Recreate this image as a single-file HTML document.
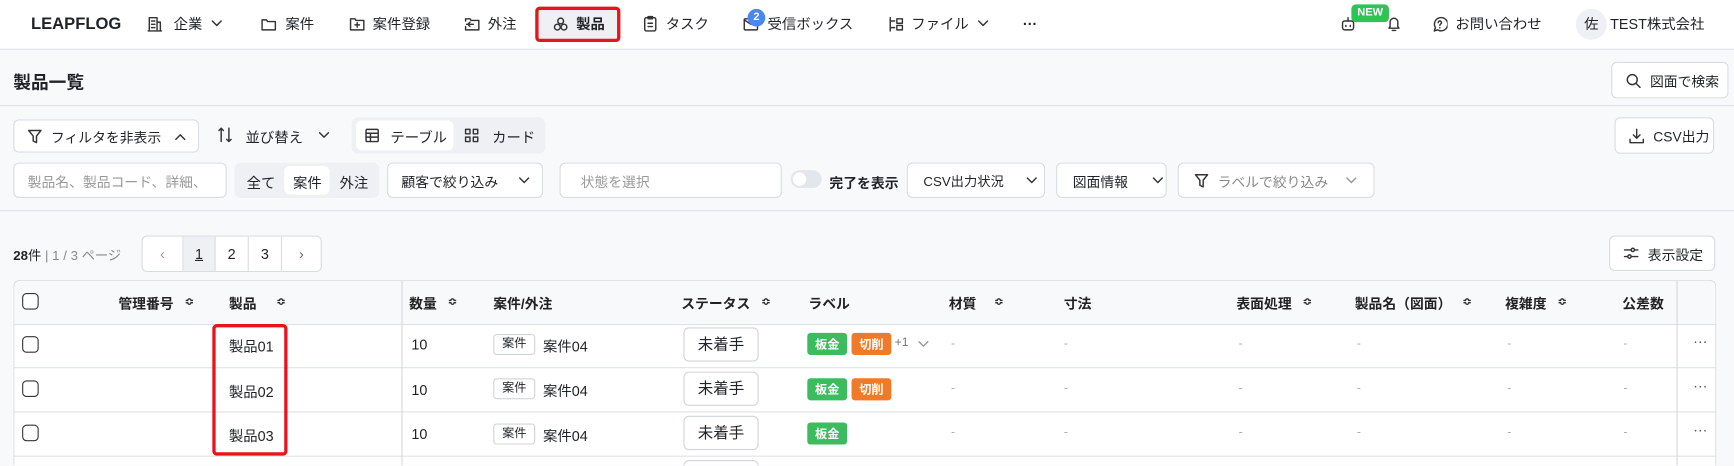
<!DOCTYPE html>
<html><head><meta charset="utf-8">
<style>
*{box-sizing:border-box;margin:0;padding:0}
html,body{width:1734px;height:466px;overflow:hidden;background:#f8f9fb}
body{font-family:"Liberation Sans","Noto Sans CJK JP",sans-serif;color:#1f2328;font-size:13px}
#w{position:absolute;left:0;top:0;width:1568px;height:421px;transform:scale(1.10587);transform-origin:0 0;background:#f8f9fb;overflow:hidden}
.a{position:absolute;white-space:nowrap}
.nav{position:absolute;left:0;top:0;width:1568px;height:45px;background:#fff;border-bottom:1px solid #dde1e7}
.nav .a{line-height:16px}
.btn{position:absolute;background:#fff;border:1px solid #d9dde3;border-radius:5px;display:flex;align-items:center;padding-left:12px;gap:8px;font-size:12.5px;white-space:nowrap}
svg{display:block}
.ic{stroke:#333;fill:none;stroke-width:1.3;stroke-linecap:round;stroke-linejoin:round}
.hl{position:absolute;left:0;width:1568px;height:1px;background:#dde1e7}
.th{position:absolute;top:253px;height:40px;display:flex;align-items:center;font-size:12.5px;font-weight:bold;color:#222;white-space:nowrap}
.cell{position:absolute;font-size:13px;white-space:nowrap}
.chk{position:absolute;left:20px;width:15px;height:15px;border:1.5px solid #333;border-radius:4px;background:#fff}
.tag{position:absolute;height:20px;border-radius:3px;color:#fff;font-size:11px;font-weight:bold;display:flex;align-items:center;justify-content:center}
.dash{position:absolute;color:#aaa;font-size:11px}
.srt{font-size:10px;color:#333;margin-left:10px}
</style></head><body><div id="w">
<div class="nav">
 <div class="a" style="left:28px;top:14px;font-weight:bold;font-size:15px">LEAPFLOG</div>
 <svg class="a ic" style="left:133px;top:15px" width="14" height="14" viewBox="0 0 14 14"><path d="M2 13V1h7v12M9 5h3v8M1 13h12M4 4h1M6 4h1M4 7h1M6 7h1M4 10h1M6 10h1"/></svg>
 <div class="a" style="left:157px;top:14px">企業</div>
 <svg class="a ic" style="left:191px;top:18px" width="10" height="7" viewBox="0 0 10 7"><path d="M1 1l4 4 4-4"/></svg>
 <svg class="a ic" style="left:236px;top:16px" width="14" height="12" viewBox="0 0 14 12"><path d="M1 2h4l1 1.5h7V11H1z"/></svg>
 <div class="a" style="left:258px;top:14px">案件</div>
 <svg class="a ic" style="left:316px;top:15px" width="14" height="13" viewBox="0 0 14 13"><path d="M1 2h4l1 1.5h7V12H1zM7 5.5v4M5 7.5h4"/></svg>
 <div class="a" style="left:337px;top:14px">案件登録</div>
 <svg class="a ic" style="left:420px;top:15px" width="14" height="13" viewBox="0 0 14 13"><path d="M1 4V2h4l1 1.5h7V12H1V9M2 7h6M5 5l-2 2 2 2"/></svg>
 <div class="a" style="left:441px;top:14px">外注</div>
 <div class="a" style="left:484px;top:6px;width:77px;height:32px;border:3px solid #e8141b;border-radius:4px;background:#eef0f4"></div>
 <svg class="a ic" style="left:500px;top:15px" width="14" height="14" viewBox="0 0 14 14"><circle cx="7" cy="4" r="2.6"/><circle cx="4" cy="9.5" r="2.6"/><circle cx="10" cy="9.5" r="2.6"/></svg>
 <div class="a" style="left:521px;top:14px;font-weight:bold">製品</div>
 <svg class="a ic" style="left:582px;top:14px" width="12" height="15" viewBox="0 0 12 15"><rect x="1" y="2" width="10" height="12" rx="1.5"/><path d="M4 1h4v2H4zM4 7h4M4 10h4"/></svg>
 <div class="a" style="left:602px;top:14px">タスク</div>
 <svg class="a ic" style="left:672px;top:16px" width="14" height="12" viewBox="0 0 14 12"><rect x="1" y="1" width="12" height="10" rx="1"/><path d="M1 2l6 4 6-4"/></svg>
 <div class="a" style="left:676px;top:8px;width:16px;height:16px;border-radius:50%;background:#4c86f0;color:#fff;font-size:10px;font-weight:bold;text-align:center;line-height:16px">2</div>
 <div class="a" style="left:694px;top:14px">受信ボックス</div>
 <svg class="a ic" style="left:803px;top:15px" width="14" height="14" viewBox="0 0 14 14"><path d="M2 1v12M2 4h4M2 10h4M8 2h5v4H8zM8 8h5v4H8z"/></svg>
 <div class="a" style="left:824px;top:14px">ファイル</div>
 <svg class="a ic" style="left:884px;top:18px" width="10" height="7" viewBox="0 0 10 7"><path d="M1 1l4 4 4-4"/></svg>
 <div class="a" style="left:925px;top:14px;font-weight:bold">···</div>
 <svg class="a ic" style="left:1213px;top:15px" width="12" height="14" viewBox="0 0 12 14"><rect x="1" y="4" width="10" height="8" rx="2"/><path d="M6 1v3M4 8v1M8 8v1"/></svg>
 <div class="a" style="left:1222px;top:4px;width:34px;height:16px;border-radius:4px;background:#2fc256;color:#fff;font-size:10px;font-weight:bold;text-align:center;line-height:16px">NEW</div>
 <svg class="a ic" style="left:1254px;top:14px" width="13" height="15" viewBox="0 0 13 15"><path d="M3 10V6a3.5 3.5 0 017 0v4l1 1.5H2zM5 13.5h3"/></svg>
 <svg class="a ic" style="left:1295px;top:15px" width="14" height="14" viewBox="0 0 14 14"><path d="M2 13l1-3a6 6 0 112 2z"/><path d="M5.5 5.5a1.5 1.5 0 113 0c0 1-1.5 1.3-1.5 2.5M7 10v.3"/></svg>
 <div class="a" style="left:1316px;top:14px">お問い合わせ</div>
 <div class="a" style="left:1425px;top:8px;width:28px;height:28px;border-radius:50%;background:#eef0f5;text-align:center;line-height:28px">佐</div>
 <div class="a" style="left:1456px;top:14px">TEST株式会社</div>
</div>
<div class="a" style="left:12px;top:61px;font-size:16px;font-weight:bold">製品一覧</div>
<div class="btn" style="left:1457px;top:56px;width:106px;height:33px"><svg class="ic" width="14" height="14" viewBox="0 0 14 14"><circle cx="6" cy="6" r="4.5"/><path d="M9.5 9.5L13 13"/></svg>図面で検索</div>
<div class="hl" style="top:95px"></div>
<div class="btn" style="left:12px;top:108px;width:168px;height:30px"><svg class="ic" width="13" height="13" viewBox="0 0 13 13"><path d="M1 1h11L8 6v6L5 10.5V6z"/></svg>フィルタを非表示<svg class="ic" style="margin-left:4px" width="10" height="7" viewBox="0 0 10 7"><path d="M1 6l4-4 4 4"/></svg></div>
<svg class="a ic" style="left:197px;top:115px" width="13" height="14" viewBox="0 0 13 14"><path d="M3 13V1M1 3l2-2 2 2M10 1v12M8 11l2 2 2-2"/></svg>
<div class="a" style="left:222px;top:114px">並び替え</div>
<svg class="a ic" style="left:288px;top:119px" width="10" height="7" viewBox="0 0 10 7"><path d="M1 1l4 4 4-4"/></svg>
<div class="a" style="left:318px;top:106px;width:175px;height:33px;background:#eef0f4;border-radius:6px"></div>
<div class="a" style="left:322px;top:109px;width:88px;height:27px;background:#fff;border-radius:5px"></div>
<svg class="a ic" style="left:330px;top:116px" width="13" height="13" viewBox="0 0 13 13"><rect x="1" y="1" width="11" height="11" rx="1"/><path d="M1 4.5h11M1 8h11M5 4.5V12"/></svg>
<div class="a" style="left:353px;top:114px">テーブル</div>
<svg class="a ic" style="left:420px;top:116px" width="13" height="13" viewBox="0 0 13 13"><rect x="1" y="1" width="4" height="4"/><rect x="8" y="1" width="4" height="4"/><rect x="1" y="8" width="4" height="4"/><rect x="8" y="8" width="4" height="4"/></svg>
<div class="a" style="left:445px;top:114px">カード</div>
<div class="btn" style="left:1460px;top:106px;width:90px;height:33px"><svg class="ic" width="14" height="14" viewBox="0 0 14 14"><path d="M7 1v8M4 6l3 3 3-3M1 10v3h12v-3"/></svg>CSV出力</div>
<div class="btn" style="left:12px;top:147px;width:193px;height:32px;color:#999">製品名、製品コード、詳細、</div>
<div class="a" style="left:212px;top:147px;width:131px;height:32px;background:#eef0f4;border-radius:6px"></div>
<div class="a" style="left:257px;top:150px;width:41px;height:26px;background:#fff;border-radius:5px"></div>
<div class="a" style="left:223px;top:155px">全て</div>
<div class="a" style="left:265px;top:155px">案件</div>
<div class="a" style="left:307px;top:155px">外注</div>
<div class="btn" style="left:350px;top:147px;width:141px;height:32px">顧客で絞り込み<svg class="ic" style="margin-left:10px" width="10" height="7" viewBox="0 0 10 7"><path d="M1 1l4 4 4-4"/></svg></div>
<div class="btn" style="left:506px;top:147px;width:201px;height:32px;color:#999;padding-left:18px">状態を選択</div>
<div class="a" style="left:715px;top:154px;width:28px;height:16px;border-radius:8px;background:#e3e6eb"><div style="position:absolute;left:2px;top:2px;width:12px;height:12px;border-radius:50%;background:#fff"></div></div>
<div class="a" style="left:750px;top:155px;font-weight:bold;font-size:12.5px">完了を表示</div>
<div class="btn" style="left:820px;top:147px;width:125px;height:32px;padding-left:14px;font-size:12px">CSV出力状況<svg class="ic" style="margin-left:12px" width="10" height="7" viewBox="0 0 10 7"><path d="M1 1l4 4 4-4"/></svg></div>
<div class="btn" style="left:955px;top:147px;width:100px;height:32px;padding-left:14px">図面情報<svg class="ic" style="margin-left:14px" width="10" height="7" viewBox="0 0 10 7"><path d="M1 1l4 4 4-4"/></svg></div>
<div class="btn" style="left:1065px;top:147px;width:178px;height:32px;color:#888;padding-left:14px"><svg class="ic" width="13" height="13" viewBox="0 0 13 13"><path d="M1 1h11L8 6v6L5 10.5V6z"/></svg>ラベルで絞り込み<svg class="ic" style="margin-left:8px;stroke:#999" width="10" height="7" viewBox="0 0 10 7"><path d="M1 1l4 4 4-4"/></svg></div>
<div class="hl" style="top:190px"></div>
<div class="a" style="left:12px;top:222px;font-size:12px"><b style="font-weight:bold">28</b>件 <span style="color:#888">| 1 / 3 ページ</span></div>
<div class="a" style="left:128px;top:213px;width:163px;height:33px;border:1px solid #d9dde3;border-radius:5px;background:#fff;display:flex;font-size:13px">
 <div style="width:37px;text-align:center;line-height:31px;color:#999;border-right:1px solid #d9dde3">‹</div>
 <div style="width:29px;text-align:center;line-height:31px;background:#eef0f4;border-right:1px solid #d9dde3;text-decoration:underline">1</div>
 <div style="width:30px;text-align:center;line-height:31px;border-right:1px solid #d9dde3">2</div>
 <div style="width:30px;text-align:center;line-height:31px;border-right:1px solid #d9dde3">3</div>
 <div style="width:35px;text-align:center;line-height:31px;color:#666">›</div>
</div>
<div class="btn" style="left:1455px;top:213px;width:96px;height:32px"><svg class="ic" width="14" height="14" viewBox="0 0 14 14"><path d="M1 4h6M10 4h3M1 10h3M7 10h6"/><circle cx="8.5" cy="4" r="1.5"/><circle cx="5.5" cy="10" r="1.5"/></svg>表示設定</div>
<div class="a" style="left:12px;top:253px;width:1540px;height:168px;background:#fff;border:1px solid #d9dde3;border-bottom:none;border-radius:6px 6px 0 0"></div>
<div class="a" style="left:13px;top:254px;width:1538px;height:39px;background:#f8f9fb;border-radius:6px 6px 0 0"></div>
<div class="a" style="left:12px;top:293px;width:1540px;height:1px;background:#dde1e7"></div>
<div class="a" style="left:12px;top:332px;width:1540px;height:1px;background:#dde1e7"></div>
<div class="a" style="left:12px;top:372px;width:1540px;height:1px;background:#dde1e7"></div>
<div class="a" style="left:12px;top:412px;width:1540px;height:1px;background:#dde1e7"></div>
<div class="a" style="left:363px;top:254px;width:1px;height:167px;background:#d4d8de"></div>
<div class="a" style="left:1516px;top:254px;width:1px;height:167px;background:#d4d8de"></div>
<div class="chk" style="top:265px"></div>
<div class="th" style="left:107px">管理番号<span class="srt">≎</span></div>
<div class="th" style="left:207px">製品<span class="srt" style="margin-left:18px">≎</span></div>
<div class="th" style="left:370px">数量<span class="srt">≎</span></div>
<div class="th" style="left:446px">案件/外注</div>
<div class="th" style="left:616px">ステータス<span class="srt">≎</span></div>
<div class="th" style="left:731px">ラベル</div>
<div class="th" style="left:858px">材質<span class="srt" style="margin-left:16px">≎</span></div>
<div class="th" style="left:962px">寸法</div>
<div class="th" style="left:1118px">表面処理<span class="srt">≎</span></div>
<div class="th" style="left:1225px">製品名（図面）<span class="srt">≎</span></div>
<div class="th" style="left:1361px">複雑度<span class="srt">≎</span></div>
<div class="th" style="left:1467px">公差数</div>

<div class="chk" style="top:304px"></div><div class="chk" style="top:344px"></div><div class="chk" style="top:384px"></div>
<div class="cell" style="left:207px;top:303px">製品01</div>
<div class="cell" style="left:207px;top:344px">製品02</div>
<div class="cell" style="left:207px;top:384px">製品03</div>
<div class="a" style="left:192px;top:293px;width:68px;height:119px;border:3px solid #e8141b;border-radius:4px"></div>
<div class="cell" style="left:372px;top:304px">10</div><div class="cell" style="left:372px;top:345px">10</div><div class="cell" style="left:372px;top:385px">10</div>

<div class="a" style="left:446px;top:302px;width:38px;height:19px;border:1px solid #d0d4da;border-radius:3px;font-size:11px;text-align:center;line-height:17px">案件</div>
<div class="a" style="left:446px;top:342px;width:38px;height:19px;border:1px solid #d0d4da;border-radius:3px;font-size:11px;text-align:center;line-height:17px">案件</div>
<div class="a" style="left:446px;top:383px;width:38px;height:19px;border:1px solid #d0d4da;border-radius:3px;font-size:11px;text-align:center;line-height:17px">案件</div>
<div class="cell" style="left:491px;top:303px">案件04</div><div class="cell" style="left:491px;top:343px">案件04</div><div class="cell" style="left:491px;top:384px">案件04</div>

<div class="a" style="left:618px;top:296px;width:68px;height:31px;border:1px solid #d0d4da;border-radius:5px;background:#fff;text-align:center;line-height:29px;font-size:14px">未着手</div>
<div class="a" style="left:618px;top:336px;width:68px;height:31px;border:1px solid #d0d4da;border-radius:5px;background:#fff;text-align:center;line-height:29px;font-size:14px">未着手</div>
<div class="a" style="left:618px;top:376px;width:68px;height:31px;border:1px solid #d0d4da;border-radius:5px;background:#fff;text-align:center;line-height:29px;font-size:14px">未着手</div>

<div class="tag" style="left:730px;top:301px;width:36px;background:#3dbb5f">板金</div>
<div class="tag" style="left:770px;top:301px;width:36px;background:#f07a2a">切削</div>
<div class="cell" style="left:809px;top:304px;color:#777;font-size:11px">+1</div>
<svg class="a ic" style="left:830px;top:308px;stroke:#999" width="10" height="7" viewBox="0 0 10 7"><path d="M1 1l4 4 4-4"/></svg>
<div class="tag" style="left:730px;top:342px;width:36px;background:#3dbb5f">板金</div>
<div class="tag" style="left:770px;top:342px;width:36px;background:#f07a2a">切削</div>
<div class="tag" style="left:730px;top:382px;width:36px;background:#3dbb5f">板金</div>

<div class="dash" style="left:860px;top:305px">-</div><div class="dash" style="left:962px;top:305px">-</div><div class="dash" style="left:1120px;top:305px">-</div><div class="dash" style="left:1227px;top:305px">-</div><div class="dash" style="left:1363px;top:305px">-</div><div class="dash" style="left:1468px;top:305px">-</div>
<div class="dash" style="left:860px;top:345px">-</div><div class="dash" style="left:962px;top:345px">-</div><div class="dash" style="left:1120px;top:345px">-</div><div class="dash" style="left:1227px;top:345px">-</div><div class="dash" style="left:1363px;top:345px">-</div><div class="dash" style="left:1468px;top:345px">-</div>
<div class="dash" style="left:860px;top:385px">-</div><div class="dash" style="left:962px;top:385px">-</div><div class="dash" style="left:1120px;top:385px">-</div><div class="dash" style="left:1227px;top:385px">-</div><div class="dash" style="left:1363px;top:385px">-</div><div class="dash" style="left:1468px;top:385px">-</div>
<div class="cell" style="left:1531px;top:301px;color:#555">···</div>
<div class="cell" style="left:1531px;top:341px;color:#555">···</div>
<div class="cell" style="left:1531px;top:381px;color:#555">···</div>
<div class="a" style="left:618px;top:416px;width:68px;height:5px;border:1px solid #d0d4da;border-bottom:none;border-radius:5px 5px 0 0;background:#fff"></div>
</div></body></html>
